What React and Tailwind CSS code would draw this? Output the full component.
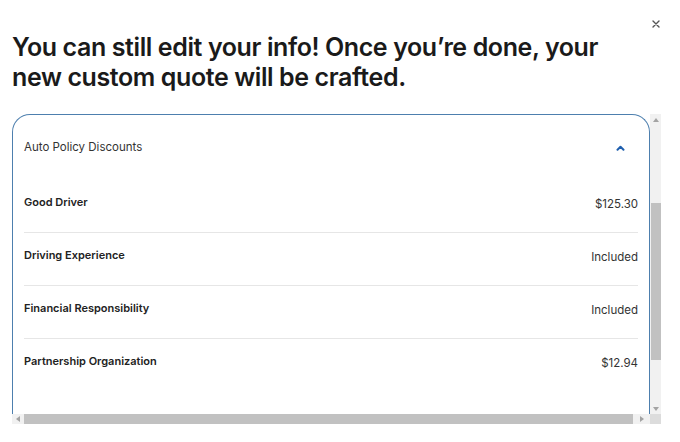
import React from 'react'

const rows = [
    { label: 'Good Driver', value: '$125.30' },
    { label: 'Driving Experience', value: 'Included' },
    { label: 'Financial Responsibility', value: 'Included' },
    { label: 'Partnership Organization', value: '$12.94' },
]

const Arrow = ({ dir }) => {
    const pts = {
        up: '0,4 3,0 6,4',
        down: '0,0 3,4 6,0',
        left: '4,0 0,3 4,6',
        right: '0,0 4,3 0,6',
    }[dir]
    const box = dir === 'up' || dir === 'down' ? '0 0 6 4' : '0 0 4 6'
    const w = dir === 'up' || dir === 'down' ? 6 : 4
    const h = dir === 'up' || dir === 'down' ? 4 : 6
    return (
        <svg width={w} height={h} viewBox={box}>
            <polygon points={pts} fill="#a3a3a3" />
        </svg>
    )
}

export default function App() {
    return (
        <div className="relative w-[680px] h-[442px] bg-white overflow-hidden" style={{ fontFamily: 'Inter, "Noto Sans", sans-serif' }}>
            <button className="absolute left-[650px] top-[18px] w-[11px] h-[11px] flex items-center justify-center">
                <svg width="8" height="8" viewBox="0 0 8 8">
                    <path d="M1 1 L7 7 M7 1 L1 7" stroke="#555" strokeWidth="1.4" strokeLinecap="round" />
                </svg>
            </button>

            <div className="pt-[32px] pl-[12px] pr-[40px]">
                <h1 className="text-[25px] leading-[30px] font-semibold text-[#1a1a1a] tracking-[-0.4px] w-[620px]">
                    You can still edit your info! Once you’re done, your new custom quote will be crafted.
                </h1>
            </div>

            <div className="ml-[12px] mt-[22px] w-[649px]">
                <div className="flex h-[300px]">
                    <div className="w-[638px] h-[300px] overflow-hidden">
                        <div className="border border-b-0 border-[#4d7fae] rounded-t-[18px] h-[320px]">
                            <div className="h-[65px] flex items-center justify-between pl-[11px] pr-[24px]">
                                <span className="text-[11.5px] text-[#333]">Auto Policy Discounts</span>
                                <svg width="9" height="6" viewBox="0 0 9 6">
                                    <path d="M1.5 4.8 L4.5 1.8 L7.5 4.8" fill="none" stroke="#1f5fae" strokeWidth="2" strokeLinecap="round" strokeLinejoin="round" />
                                </svg>
                            </div>
                            <div className="px-[11px]">
                                {rows.map((r, i) => (
                                    <div
                                        key={r.label}
                                        className={`flex justify-between items-start pt-[15px] h-[53px] ${i < rows.length - 1 ? 'border-b border-[#e6e6e6]' : ''}`}
                                    >
                                        <span className="text-[11px] leading-[14px] font-semibold text-[#222]">{r.label}</span>
                                        <span className="text-[11.5px] leading-[16px] mt-[1px] text-[#333]">{r.value}</span>
                                    </div>
                                ))}
                            </div>
                        </div>
                    </div>
                    <div className="w-[11px] h-[300px] bg-[#f1f1f1] flex flex-col items-center">
                        <div className="h-[11px] flex items-center justify-center"><Arrow dir="up" /></div>
                        <div className="mt-[78px] w-[10px] h-[157px] bg-[#c1c1c1]" />
                        <div className="flex-1" />
                        <div className="h-[11px] flex items-center justify-center"><Arrow dir="down" /></div>
                    </div>
                </div>
                <div className="flex h-[10px]">
                    <div className="w-[638px] bg-[#f1f1f1] flex items-center">
                        <div className="w-[12px] flex items-center justify-center"><Arrow dir="left" /></div>
                        <div className="w-[609px] h-[10px] bg-[#c1c1c1]" />
                        <div className="flex-1 flex items-center justify-center"><Arrow dir="right" /></div>
                    </div>
                    <div className="w-[11px] bg-[#dcdcdc]" />
                </div>
            </div>
        </div>
    )
}
